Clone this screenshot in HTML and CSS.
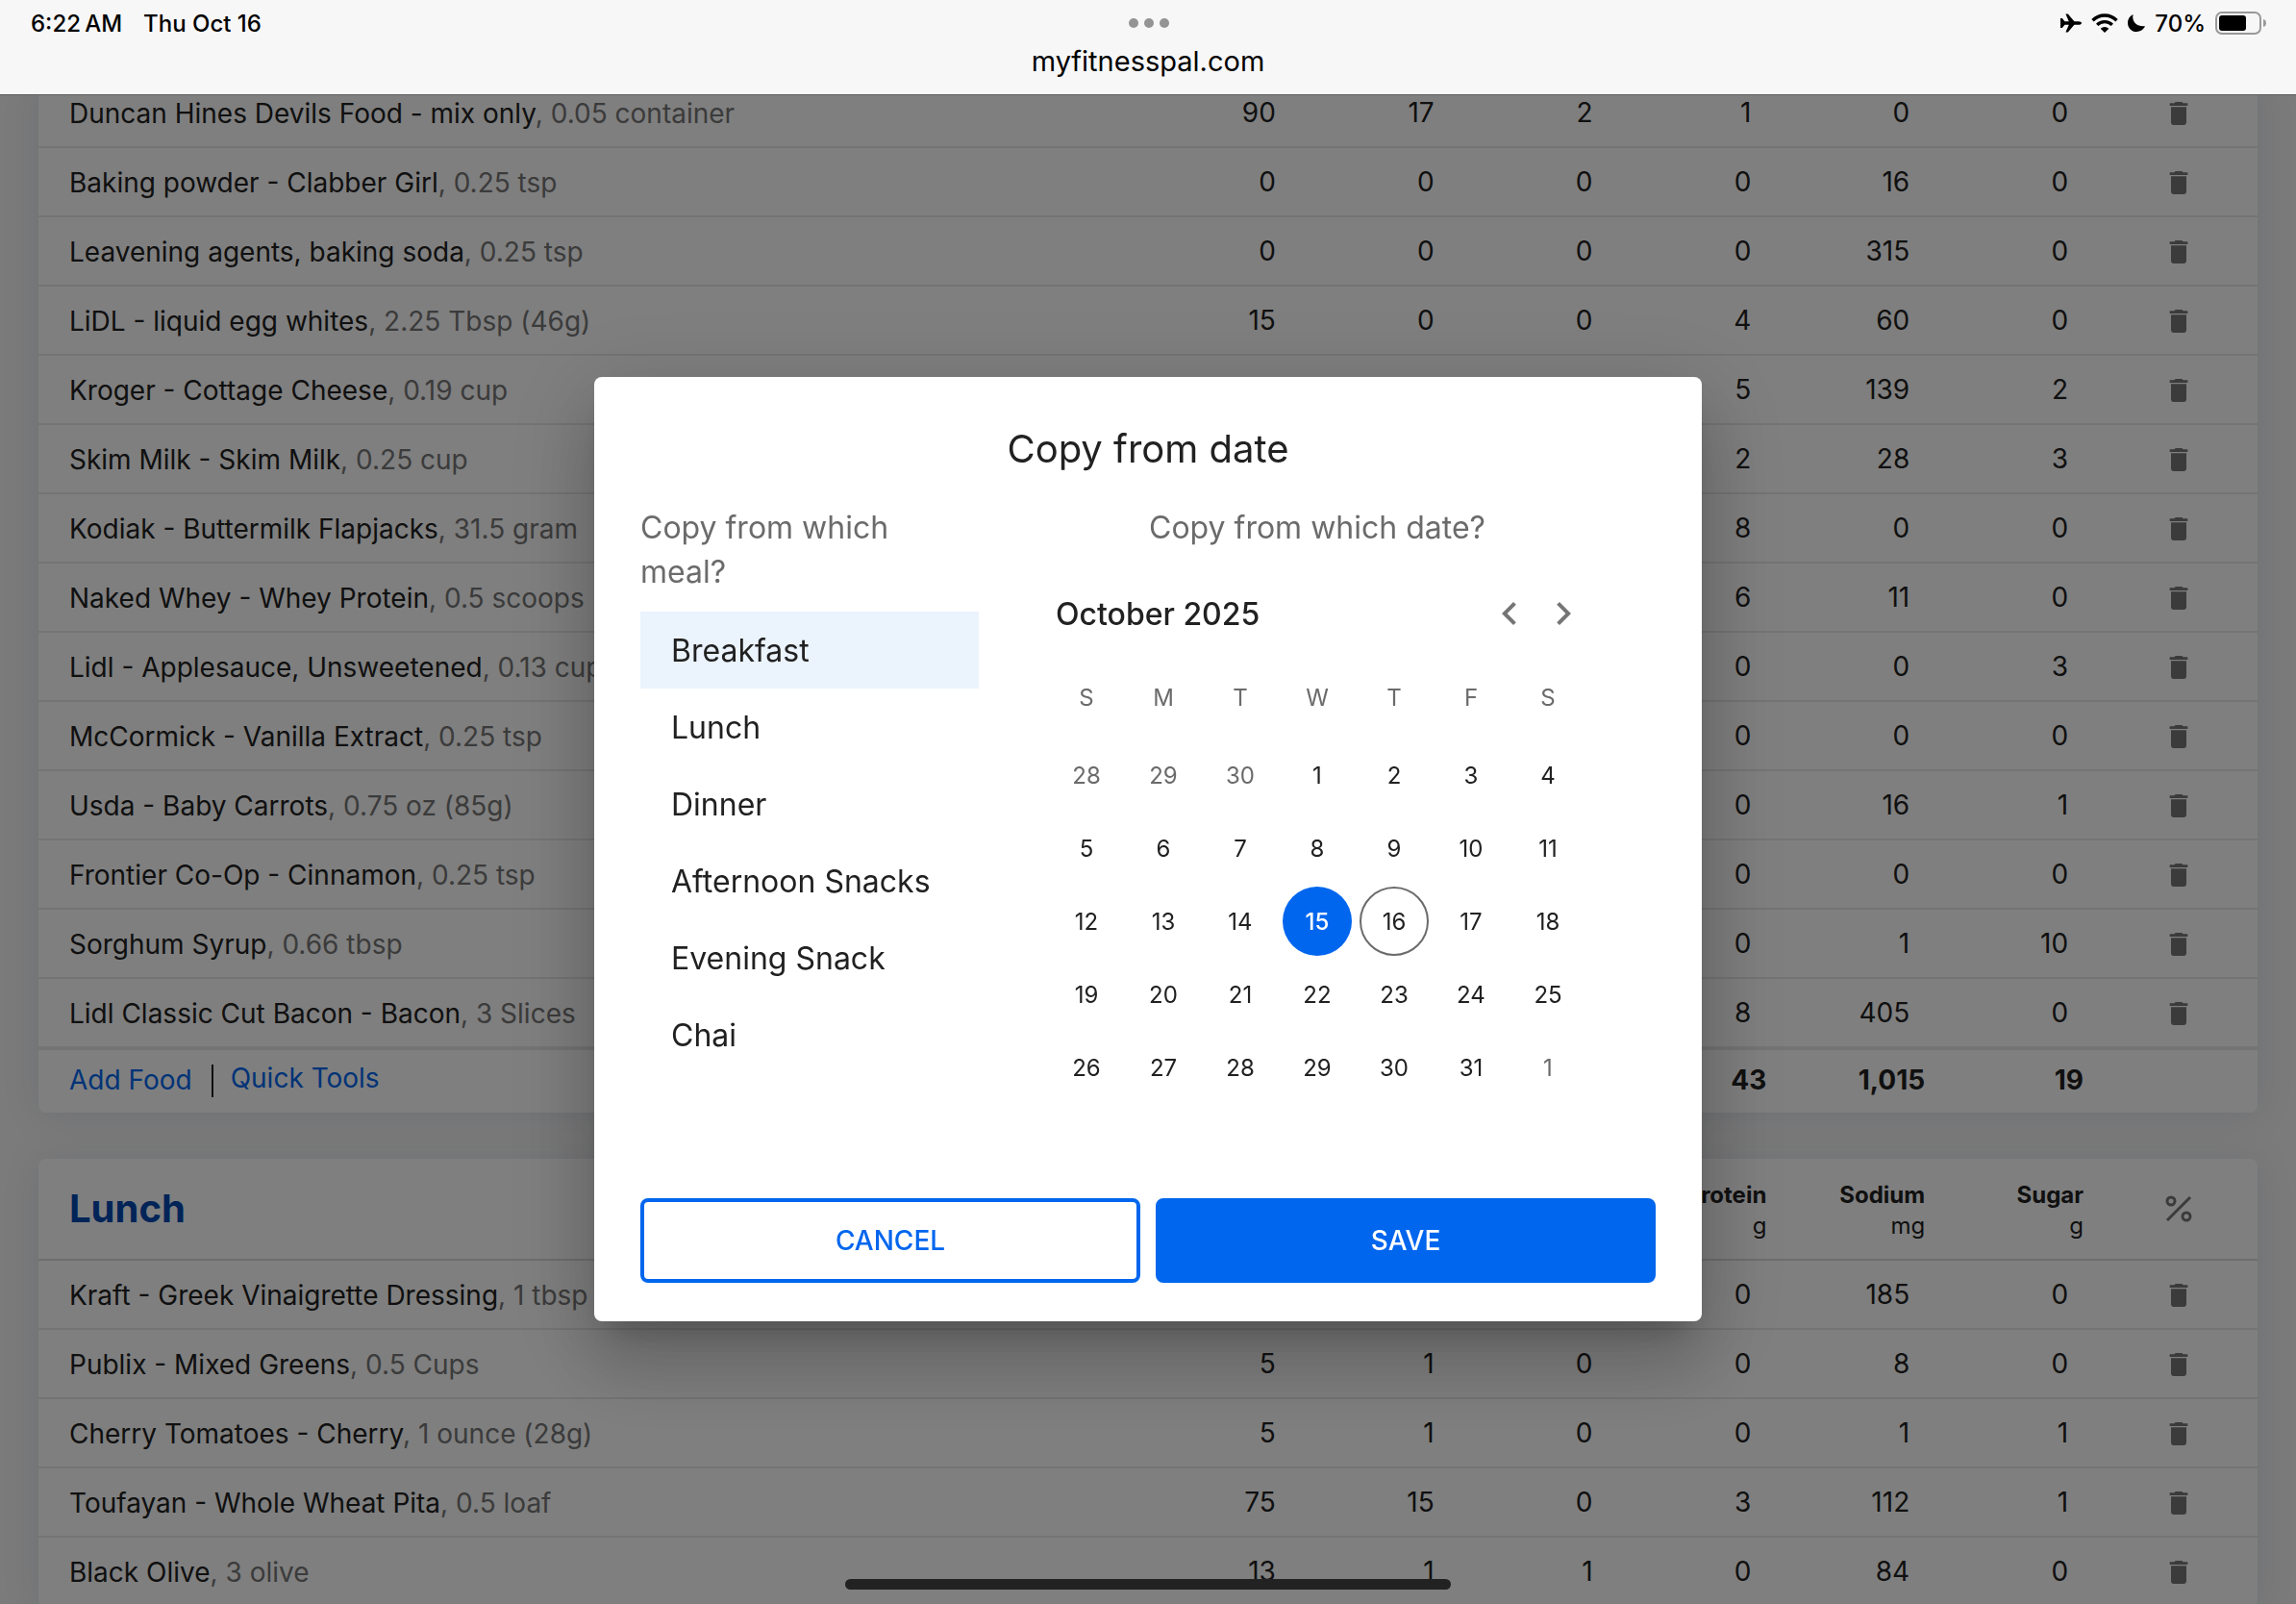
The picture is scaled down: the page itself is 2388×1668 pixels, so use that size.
FILE: index.html
```html
<!DOCTYPE html>
<html lang="en">
<head>
<meta charset="utf-8">
<meta name="viewport" content="width=device-width, initial-scale=1">
<title>MyFitnessPal – Food Diary</title>
<link rel="stylesheet" href="styles.css">
</head>
<body>
<svg class="sprite" aria-hidden="true">
  <symbol id="trash" viewBox="0 0 24 24"><path d="M6 19c0 1.1.9 2 2 2h8c1.1 0 2-.9 2-2V7H6v12zM19 4h-3.5l-1-1h-5l-1 1H5v2h14V4z"/></symbol>
</svg>

<header class="topbar">
  <div class="status">
    <div class="status-left"><span>6:22&thinsp;AM</span><span>Thu Oct 16</span></div>
    <div class="dots"><i></i><i></i><i></i></div>
    <div class="status-right">
      <svg class="ic-plane" viewBox="0 0 22 20"><path d="M0 5h1.800l2.700 3.200h4.300L5.400.4h2.400l6.600 7.800h4.400c1.800 0 3.200.8 3.200 1.800s-1.400 1.800-3.200 1.800h-4.400l-6.600 7.800H5.400l3.400-7.800H4.500L1.800 15H0z"/></svg>
      <svg class="ic-wifi" viewBox="0 0 28 20"><path class="arc" d="M1.500 7.200a17.700 17.700 0 0 1 25 0M6.200 11.900a11 11 0 0 1 15.600 0"/><path d="M14 20l-4.300-4.300a6.100 6.100 0 0 1 8.600 0z"/></svg>
      <svg class="ic-moon" viewBox="0 0 18 18"><path d="M5.600 0C4 5.800 7.500 12.800 18 12.300 16.500 15.800 13 18 9.200 18 4 18 0 14 0 8.900 0 4.900 2.200 1.500 5.600 0z"/></svg>
      <span>70%</span>
      <svg class="ic-battery" viewBox="0 0 54 24"><rect class="shell" x="1" y="1" width="46" height="22" rx="6"/><rect x="4" y="4" width="28" height="16" rx="3"/><path class="cap" d="M50 8c4 1 4 7 0 8z"/></svg>
    </div>
  </div>
  <div class="address">myfitnesspal.com</div>
</header>

<main class="diary">
  <table class="meal-card">
    <colgroup><col class="col-name"><col span="7"></colgroup>
    <tbody>
      <tr><td>Duncan Hines Devils Food - mix only<span>, 0.05 container</span></td><td>90</td><td>17</td><td>2</td><td>1</td><td>0</td><td>0</td><td><button aria-label="Delete"><svg><use href="#trash"/></svg></button></td></tr>
      <tr><td>Baking powder - Clabber Girl<span>, 0.25 tsp</span></td><td>0</td><td>0</td><td>0</td><td>0</td><td>16</td><td>0</td><td><button aria-label="Delete"><svg><use href="#trash"/></svg></button></td></tr>
      <tr><td>Leavening agents, baking soda<span>, 0.25 tsp</span></td><td>0</td><td>0</td><td>0</td><td>0</td><td>315</td><td>0</td><td><button aria-label="Delete"><svg><use href="#trash"/></svg></button></td></tr>
      <tr><td>LiDL - liquid egg whites<span>, 2.25 Tbsp (46g)</span></td><td>15</td><td>0</td><td>0</td><td>4</td><td>60</td><td>0</td><td><button aria-label="Delete"><svg><use href="#trash"/></svg></button></td></tr>
      <tr><td>Kroger - Cottage Cheese<span>, 0.19 cup</span></td><td></td><td></td><td></td><td>5</td><td>139</td><td>2</td><td><button aria-label="Delete"><svg><use href="#trash"/></svg></button></td></tr>
      <tr><td>Skim Milk - Skim Milk<span>, 0.25 cup</span></td><td></td><td></td><td></td><td>2</td><td>28</td><td>3</td><td><button aria-label="Delete"><svg><use href="#trash"/></svg></button></td></tr>
      <tr><td>Kodiak - Buttermilk Flapjacks<span>, 31.5 gram</span></td><td></td><td></td><td></td><td>8</td><td>0</td><td>0</td><td><button aria-label="Delete"><svg><use href="#trash"/></svg></button></td></tr>
      <tr><td>Naked Whey - Whey Protein<span>, 0.5 scoops</span></td><td></td><td></td><td></td><td>6</td><td>11</td><td>0</td><td><button aria-label="Delete"><svg><use href="#trash"/></svg></button></td></tr>
      <tr><td>Lidl - Applesauce, Unsweetened<span>, 0.13 cup</span></td><td></td><td></td><td></td><td>0</td><td>0</td><td>3</td><td><button aria-label="Delete"><svg><use href="#trash"/></svg></button></td></tr>
      <tr><td>McCormick - Vanilla Extract<span>, 0.25 tsp</span></td><td></td><td></td><td></td><td>0</td><td>0</td><td>0</td><td><button aria-label="Delete"><svg><use href="#trash"/></svg></button></td></tr>
      <tr><td>Usda - Baby Carrots<span>, 0.75 oz (85g)</span></td><td></td><td></td><td></td><td>0</td><td>16</td><td>1</td><td><button aria-label="Delete"><svg><use href="#trash"/></svg></button></td></tr>
      <tr><td>Frontier Co-Op - Cinnamon<span>, 0.25 tsp</span></td><td></td><td></td><td></td><td>0</td><td>0</td><td>0</td><td><button aria-label="Delete"><svg><use href="#trash"/></svg></button></td></tr>
      <tr><td>Sorghum Syrup<span>, 0.66 tbsp</span></td><td></td><td></td><td></td><td>0</td><td>1</td><td>10</td><td><button aria-label="Delete"><svg><use href="#trash"/></svg></button></td></tr>
      <tr><td>Lidl Classic Cut Bacon - Bacon<span>, 3 Slices</span></td><td></td><td></td><td></td><td>8</td><td>405</td><td>0</td><td><button aria-label="Delete"><svg><use href="#trash"/></svg></button></td></tr>
    </tbody>
    <tfoot>
      <tr><td><div class="links"><a href="#add">Add Food</a><a class="quick" href="#tools">Quick Tools</a></div></td><td></td><td></td><td></td><td>43</td><td>1,015</td><td>19</td><td></td></tr>
    </tfoot>
  </table>

  <table class="meal-card">
    <colgroup><col class="col-name"><col span="7"></colgroup>
    <thead>
      <tr><th scope="col"><h2>Lunch</h2></th><td></td><td></td><td></td>
        <th scope="col">Protein<small>g</small></th><th scope="col">Sodium<small>mg</small></th><th scope="col">Sugar<small>g</small></th>
        <td><button aria-label="Show percentages"><svg viewBox="0 0 32 32"><path class="pct" d="M4 28L28 4"/><circle class="pct" cx="8" cy="8" r="4"/><circle class="pct" cx="24" cy="24" r="4"/></svg></button></td></tr>
    </thead>
    <tbody>
      <tr><td>Kraft - Greek Vinaigrette Dressing<span>, 1 tbsp</span></td><td></td><td></td><td></td><td>0</td><td>185</td><td>0</td><td><button aria-label="Delete"><svg><use href="#trash"/></svg></button></td></tr>
      <tr><td>Publix - Mixed Greens<span>, 0.5 Cups</span></td><td>5</td><td>1</td><td>0</td><td>0</td><td>8</td><td>0</td><td><button aria-label="Delete"><svg><use href="#trash"/></svg></button></td></tr>
      <tr><td>Cherry Tomatoes - Cherry<span>, 1 ounce (28g)</span></td><td>5</td><td>1</td><td>0</td><td>0</td><td>1</td><td>1</td><td><button aria-label="Delete"><svg><use href="#trash"/></svg></button></td></tr>
      <tr><td>Toufayan - Whole Wheat Pita<span>, 0.5 loaf</span></td><td>75</td><td>15</td><td>0</td><td>3</td><td>112</td><td>1</td><td><button aria-label="Delete"><svg><use href="#trash"/></svg></button></td></tr>
      <tr><td>Black Olive<span>, 3 olive</span></td><td>13</td><td>1</td><td>1</td><td>0</td><td>84</td><td>0</td><td><button aria-label="Delete"><svg><use href="#trash"/></svg></button></td></tr>
    </tbody>
  </table>
</main>

<div class="backdrop">
  <section class="dialog" role="dialog" aria-modal="true" aria-labelledby="dialog-title">
    <h1 id="dialog-title">Copy from date</h1>
    <div class="panes">
      <div class="meals">
        <p class="question">Copy from which meal?</p>
        <div class="meal-list">
          <button class="selected">Breakfast</button>
          <button>Lunch</button>
          <button>Dinner</button>
          <button>Afternoon Snacks</button>
          <button>Evening Snack</button>
          <button>Chai</button>
        </div>
      </div>
      <div class="dates">
        <p class="question">Copy from which date?</p>
        <div class="calendar">
          <div class="month">
            <strong>October 2025</strong>
            <button aria-label="Previous month"><svg viewBox="0 0 24 24"><path d="M15.41 7.41L14 6l-6 6 6 6 1.41-1.41L10.83 12z"/></svg></button>
            <button aria-label="Next month"><svg viewBox="0 0 24 24"><path d="M10 6L8.59 7.41 13.17 12l-4.58 4.59L10 18l6-6z"/></svg></button>
          </div>
          <div class="weekdays"><span>S</span><span>M</span><span>T</span><span>W</span><span>T</span><span>F</span><span>S</span></div>
          <div class="days">
            <button class="out">28</button><button class="out">29</button><button class="out">30</button><button>1</button><button>2</button><button>3</button><button>4</button>
            <button>5</button><button>6</button><button>7</button><button>8</button><button>9</button><button>10</button><button>11</button>
            <button>12</button><button>13</button><button>14</button><button class="picked">15</button><button class="today">16</button><button>17</button><button>18</button>
            <button>19</button><button>20</button><button>21</button><button>22</button><button>23</button><button>24</button><button>25</button>
            <button>26</button><button>27</button><button>28</button><button>29</button><button>30</button><button>31</button><button class="out">1</button>
          </div>
        </div>
      </div>
    </div>
    <div class="actions">
      <button class="cancel">CANCEL</button>
      <button class="save">SAVE</button>
    </div>
  </section>
</div>
<div class="home-indicator"></div>
</body>
</html>
```
FILE: styles.css
```css
:root {
  --ink: #212121;
  --muted: #767676;
  --blue: #0066ee;
  --line: #e8e8e8;
}

* { box-sizing: border-box; }

body {
  margin: 0;
  height: 100vh;
  overflow: hidden;
  background: #f6f6f6;
  color: var(--ink);
  font-family: Inter, "Liberation Sans", sans-serif;
  font-size: 28px;
  font-optical-sizing: none;
}

button {
  padding: 0;
  border: 0;
  background: none;
  color: inherit;
  font: inherit;
  cursor: pointer;
}

h1, h2, p { margin: 0; }
a { color: var(--blue); text-decoration: none; }
svg { display: block; }
.sprite { position: absolute; width: 0; height: 0; }

/* Browser bar */
.topbar {
  position: fixed;
  inset: 0 0 auto;
  z-index: 3;
  height: 99px;
  background: #f7f7f7;
  border-bottom: 1px solid #5c5c5c;
  color: #000;
}
.status {
  display: grid;
  grid-template-columns: 1fr auto 1fr;
  align-items: center;
  height: 48px;
  padding: 0 30px 0 32px;
  font-size: 24px;
  font-weight: 500;
}
.status-left { display: flex; gap: 22px; }
.dots { display: flex; gap: 6px; }
.dots i { width: 10px; height: 10px; border-radius: 50%; background: #949494; }
.status-right { display: flex; align-items: center; justify-content: flex-end; gap: 10px; }
.ic-plane { width: 22px; height: 20px; }
.ic-wifi { width: 28px; height: 20px; }
.ic-wifi .arc { fill: none; stroke: #000; stroke-width: 3.4; }
.ic-moon { width: 18px; height: 18px; }
.ic-battery { width: 54px; height: 24px; }
.ic-battery .shell { fill: none; stroke: #999; stroke-width: 2; }
.ic-battery .cap { fill: #999; }
.address { font-size: 29px; line-height: 32px; text-align: center; }

/* Food diary */
.diary {
  display: flex;
  flex-direction: column;
  gap: 48px;
  padding: 82px 40px 0;
}
.meal-card {
  width: 100%;
  table-layout: fixed;
  border-spacing: 0;
  border-radius: 8px;
  background: #fff;
  box-shadow: 0 2px 40px rgba(0, 40, 110, .1);
}
.col-name { width: 50%; }
.meal-card td, .meal-card th { padding: 0; }
.meal-card tbody td {
  height: 72px;
  padding-right: 32px;
  border-bottom: 2px solid var(--line);
  text-align: right;
  white-space: nowrap;
}
.meal-card tbody td:first-child {
  padding: 2px 0 0 32px;
  text-align: left;
}
.meal-card td:first-child span { color: var(--muted); }
.meal-card tbody td:last-child, .meal-card thead td:last-child { padding: 0 0 2px; text-align: center; }
.meal-card td button { display: inline-block; vertical-align: middle; }
.meal-card td svg { width: 32px; height: 32px; fill: var(--muted); }
.meal-card tfoot td {
  height: 67px;
  padding: 11px 16px 0 0;
  border-top: 2px solid var(--line);
  font-weight: 700;
  line-height: 40px;
  text-align: right;
  vertical-align: top;
}
.meal-card tfoot td:first-child { padding: 11px 0 0 32px; }
.links { display: flex; font-weight: 400; }
.links .quick {
  height: 34px;
  margin: 4px 0 0 20px;
  padding-left: 18px;
  border-left: 2px solid var(--ink);
  line-height: 28px;
}
.meal-card thead th, .meal-card thead td {
  height: 106px;
  padding: 4px 16px 0 0;
  border-bottom: 2px solid #dcdcdc;
  font-size: 24px;
  line-height: 32px;
  text-align: right;
}
.meal-card thead th:first-child { padding: 0 0 0 32px; text-align: left; }
.meal-card h2 { color: #0048b0; font-size: 40px; line-height: 48px; }
.meal-card small { display: block; font-size: 24px; font-weight: 400; }
.meal-card svg .pct { fill: none; stroke: var(--muted); stroke-width: 3; }

/* Copy dialog */
.backdrop {
  position: fixed;
  inset: 98px 0 0;
  z-index: 2;
  display: grid;
  place-items: center;
  background: rgba(0, 0, 0, .5);
}
.dialog {
  width: 1152px;
  max-width: 100%;
  padding: 48px 48px 40px;
  border-radius: 8px;
  background: #fff;
  box-shadow: 0 22px 30px -14px rgba(0, 0, 0, .2), 0 48px 76px 6px rgba(0, 0, 0, .14), 0 18px 92px 16px rgba(0, 0, 0, .12);
}
.dialog h1 { margin-bottom: 32px; font-size: 40px; font-weight: 400; line-height: 54px; text-align: center; }
.panes { display: grid; grid-template-columns: 1fr 2fr; }
.question { color: #6b6b6b; font-size: 32px; line-height: 46px; }
.meal-list { display: flex; flex-direction: column; margin-top: 18px; font-size: 32px; }
.meal-list button { height: 80px; padding-left: 32px; text-align: left; }
.meal-list .selected { background: #ebf3fd; }
.dates { text-align: center; }
.calendar { width: 640px; margin: 26px auto 0; font-size: 24px; }
.month { display: flex; align-items: center; gap: 8px; height: 80px; padding: 0 40px 0 48px; }
.month strong { flex: 1; font-size: 32px; font-weight: 500; text-align: left; }
.month svg { width: 48px; height: 48px; fill: #757575; }
.weekdays, .days {
  display: grid;
  grid-template-columns: repeat(7, 72px);
  justify-content: center;
  gap: 4px 8px;
}
.weekdays { margin: 8px 0 4px; color: #6b6b6b; line-height: 80px; }
.days button { height: 72px; border-radius: 50%; }
.days .out { color: #6b6b6b; }
.days .picked { background: var(--blue); color: #fff; font-weight: 500; }
.days .today { border: 2px solid #6b6b6b; }
.actions { display: grid; grid-template-columns: 1fr 1fr; gap: 16px; margin-top: 100px; }
.actions button { height: 88px; border: 4px solid var(--blue); border-radius: 8px; font-weight: 500; }
.actions .cancel { color: var(--blue); }
.actions .save { background: var(--blue); color: #fff; }

.home-indicator {
  position: fixed;
  bottom: 15px;
  left: calc(50% - 315px);
  z-index: 4;
  width: 630px;
  height: 11px;
  border-radius: 6px;
  background: #222;
}
```
